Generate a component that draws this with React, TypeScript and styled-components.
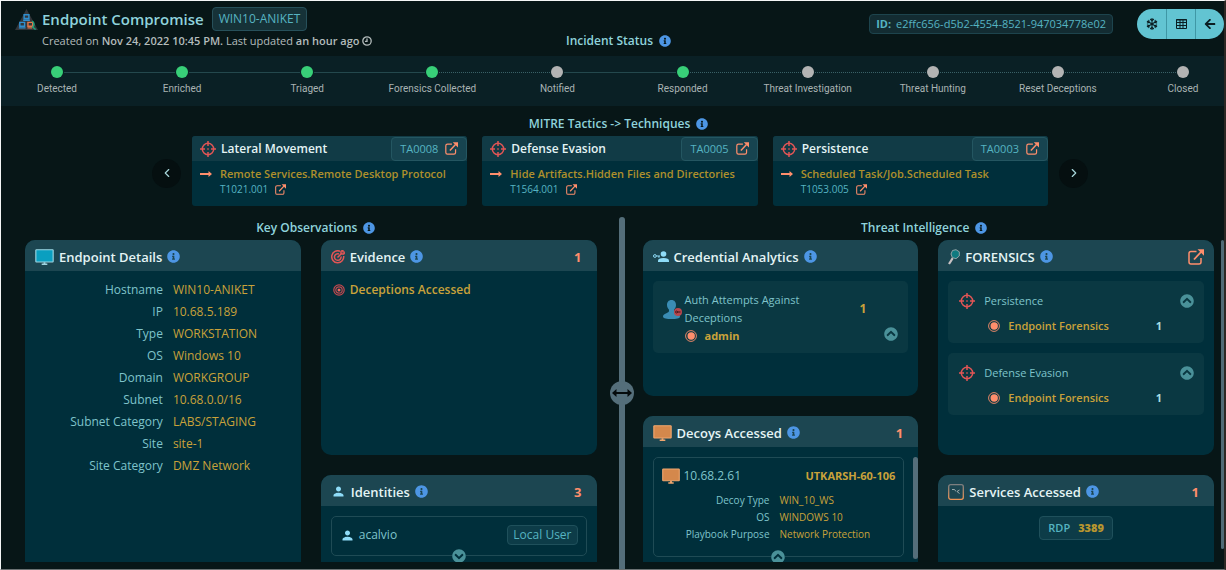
import React from "react";
import styled, { createGlobalStyle, css } from "styled-components";
import {
  FaInfoCircle,
  FaChevronCircleUp,
  FaChevronCircleDown,
  FaRegSnowflake,
  FaArrowLeft,
} from "react-icons/fa";
import { MdPerson } from "react-icons/md";
import { ChevronLeft, ChevronRight } from "lucide-react";

const c = {
  page: "#071617",
  band: "#0a2025",
  card: "#002f3b",
  head: "#1c4651",
  inset: "#0a3842",
  line: "#1f4b55",
  title: "#8fd3dc",
  label: "#7fc4cb",
  teal: "#56b4c2",
  gold: "#c9a23a",
  coral: "#ff8e6c",
  red: "#e25555",
  white: "#e4f4f5",
};

const Global = createGlobalStyle`
  *, *::before, *::after { box-sizing: border-box; }
  body { margin: 0; background: ${c.page}; }
  h1, h2, h3, p, ul, ol, dl, dd { margin: 0; padding: 0; }
  ul, ol { list-style: none; }
  button { font: inherit; cursor: pointer; padding: 0; border: 0; background: none; color: inherit; }
  a { color: inherit; text-decoration: none; }
  svg { display: block; flex: none; }
`;

const Page = styled.div`
  height: 100vh;
  display: flex;
  flex-direction: column;
  overflow: hidden;
  background: ${c.page};
  color: ${c.label};
  font: 12px/18px "Open Sans", "Noto Sans", sans-serif;
  border-style: solid;
  border-width: 1px 2px 1px 1px;
  border-color: #f4f6f6 #2c2824 #6b7273 #f4f6f6;
`;

const Header = styled.header`
  display: grid;
  grid-template-columns: 1fr auto 1fr;
  height: 55px;
  padding-left: 12px;
  flex: none;
`;

const HeaderLeft = styled.div`
  display: grid;
  grid-template-columns: 23px auto;
  column-gap: 4px;
  justify-content: start;
  align-content: start;
  align-items: center;
  padding: 6px 0 0 2px;
`;

const TitleRow = styled.div`
  display: flex;
  align-items: center;
  gap: 8px;
`;

const Title = styled.h1`
  font-size: 15px;
  line-height: 24px;
  font-weight: 600;
  color: ${c.title};
  white-space: nowrap;
`;

const Tag = styled.span<{ $h?: number }>`
  display: inline-flex;
  align-items: center;
  gap: 8px;
  height: ${(p) => p.$h ?? 24}px;
  padding: 0 6px;
  border: 1px solid #27505a;
  border-radius: 4px;
  background: #163238;
  color: ${c.teal};
  white-space: nowrap;
`;

const CardTag = styled(Tag)`
  padding: 0 5px;
  background: #0d3c48;
  border-color: #1f505b;
`;

const IdTag = styled(Tag)`
  gap: 5px;
  padding: 0 6px;
  font-size: 11px;
  background: #132c32;
  border-color: #1d444d;
`;

const Meta = styled.p`
  grid-column: 2;
  display: flex;
  align-items: center;
  gap: 2px;
  font-size: 11px;
  line-height: 20px;
  color: #b4bcbc;
  white-space: nowrap;
  b {
    font-weight: 600;
  }
`;

const HeaderRight = styled.div`
  display: flex;
  justify-content: flex-end;
  align-items: flex-start;
  gap: 24px;
  padding-top: 8px;
`;

const IdWrap = styled.div`
  display: flex;
  padding-top: 5px;
`;

const ButtonGroup = styled.div`
  display: flex;
  border-radius: 15px;
  overflow: hidden;
  background: #62c4d2;
`;

const GroupButton = styled.button`
  width: 29px;
  height: 30px;
  display: grid;
  place-items: center;
  color: #0b1e22;
  & + & {
    border-left: 1px solid #3f97a5;
  }
`;

const SectionTitle = styled.h2`
  display: flex;
  align-items: center;
  justify-content: center;
  gap: 6px;
  font-size: 12px;
  line-height: 22px;
  font-weight: 600;
  color: ${c.title};
  white-space: nowrap;
`;

const StatusTitle = styled(SectionTitle)`
  align-self: end;
  padding-bottom: 4px;
`;

const LeftPaneTitle = styled(SectionTitle)`
  padding-left: 10px;
`;

const RightPaneTitle = styled(SectionTitle)`
  padding-right: 8px;
`;

const InfoButton = styled.button`
  color: #4d96e4;
`;

const Timeline = styled.ol`
  flex: none;
  display: flex;
  height: 50px;
  padding: 10px 41px 0 56px;
  background: ${c.band};
`;

const Step = styled.li`
  flex: 1 1 0;
  display: flex;
  &:last-child {
    flex: 0 0 0;
  }
`;

const Stop = styled.div`
  width: 0;
  display: flex;
  flex-direction: column;
  align-items: center;
  gap: 3px;
  font-family: Roboto, "Noto Sans", sans-serif;
  font-size: 10px;
  line-height: 16px;
  color: #a9b3b3;
  white-space: nowrap;
`;

const Dot = styled.i<{ $done: boolean }>`
  flex: none;
  width: 12px;
  height: 12px;
  border-radius: 50%;
  background: ${(p) => (p.$done ? "#38cf78" : "#b3b3b3")};
`;

const Track = styled.span<{ $dashed: boolean }>`
  flex: 1;
  height: 0;
  margin: 6px 7px 0;
  border-top: ${(p) => (p.$dashed ? "1px dotted #3a6066" : "1px solid #24484d")};
`;

const Mitre = styled.section`
  flex: none;
  padding: 7px 0 11px 12px;
`;

const Carousel = styled.div`
  display: flex;
  align-items: center;
  gap: 11px;
  padding: 0 136px 0 139px;
  margin-top: 1px;
`;

const Nav = styled.button`
  flex: none;
  width: 29px;
  height: 29px;
  margin-top: 4px;
  border-radius: 50%;
  background: #050f10;
  color: #a8d8dc;
  display: grid;
  place-items: center;
`;

const TacticList = styled.ul`
  flex: 1;
  display: grid;
  grid-template-columns: repeat(3, minmax(0, 1fr));
  gap: 15px;
`;

const Tactic = styled.li`
  height: 70px;
  border-radius: 3px;
  overflow: hidden;
  background: ${c.card};
`;

const TacticHead = styled.div`
  display: flex;
  align-items: center;
  gap: 5px;
  height: 25px;
  padding-left: 8px;
  background: #113b46;
  color: ${c.white};
  h3 {
    flex: 1;
    font-size: 12px;
    font-weight: 600;
    white-space: nowrap;
  }
`;

const TacticLink = styled.a`
  display: flex;
  align-items: center;
  gap: 7px;
  height: 24px;
  padding: 0 8px;
  border: 1px solid #245661;
  border-radius: 4px;
  background: #174450;
  font-size: 11px;
  color: ${c.teal};
`;

const TacticBody = styled.div`
  display: grid;
  grid-template-columns: 12px auto;
  column-gap: 8px;
  align-items: center;
  justify-content: start;
  padding: 4px 8px;
  strong {
    font-size: 11px;
    font-weight: 600;
    line-height: 17px;
    color: #ae902c;
    white-space: nowrap;
  }
`;

const TechniqueLink = styled.a`
  grid-column: 2;
  display: flex;
  align-items: center;
  gap: 7px;
  font-size: 10px;
  line-height: 14px;
  color: ${c.teal};
`;

const Split = styled.main`
  flex: 1;
  min-height: 0;
  display: grid;
  grid-template-columns: minmax(0, 1fr) 10px minmax(0, 1fr);
  gap: 18px;
  padding: 0 10px 0 24px;
`;

const Pane = styled.section`
  min-height: 0;
  display: flex;
  flex-direction: column;
  gap: 1px;
  padding-bottom: 7px;
  position: relative;
`;

const Columns = styled.div`
  flex: 1;
  min-height: 0;
  overflow: hidden;
  display: grid;
  grid-template-columns: repeat(2, minmax(0, 1fr));
  gap: 20px;
`;

const Column = styled.div`
  min-height: 0;
  display: flex;
  flex-direction: column;
  gap: 20px;
`;

const PaneThumb = styled.span`
  position: absolute;
  right: -10px;
  top: 23px;
  bottom: 20px;
  width: 3px;
  border-radius: 2px;
  background: #4f6b76;
`;

const Divider = styled.div`
  justify-self: end;
  width: 6px;
  border-radius: 3px 3px 0 0;
  background: #546e7a;
  display: flex;
  align-items: center;
  justify-content: center;
`;

const Handle = styled.button`
  flex: none;
  width: 24px;
  height: 24px;
  border-radius: 50%;
  background: #546e7a;
  color: #050b0c;
  display: grid;
  place-items: center;
`;

const Card = styled.article<{ $h?: number }>`
  ${(p) => (p.$h ? css`flex: 0 0 ${p.$h}px;` : css`flex: 1; min-height: 0;`)}
  display: flex;
  flex-direction: column;
  border-radius: ${(p) => (p.$h ? "10px" : "10px 10px 0 0")};
  overflow: hidden;
  background: ${c.card};
`;

const CardHead = styled.header`
  flex: none;
  display: flex;
  align-items: center;
  gap: 5px;
  height: 31px;
  padding: 2px 10px 0;
  background: ${c.head};
  h3 {
    font-size: 13px;
    font-weight: 600;
    color: ${c.white};
    white-space: nowrap;
  }
`;

const Count = styled.span`
  margin-left: auto;
  padding-right: 5px;
  font-size: 13px;
  font-weight: 700;
  color: ${c.coral};
`;

const OpenLink = styled.a`
  margin-left: auto;
  color: ${c.coral};
`;

const CardBody = styled.div`
  flex: 1;
  min-height: 0;
  display: flex;
  flex-direction: column;
  gap: 10px;
  padding: 10px 10px 0;
  position: relative;
`;

const Facts = styled.dl<{ $small?: boolean }>`
  display: grid;
  grid-template-columns: ${(p) => (p.$small ? "116px auto" : "50% auto")};
  column-gap: 10px;
  font-size: ${(p) => (p.$small ? 10 : 12)}px;
  line-height: ${(p) => (p.$small ? 17 : 22)}px;
  padding-top: ${(p) => (p.$small ? 0 : 8)}px;
  white-space: nowrap;
  dt {
    text-align: right;
  }
  dd {
    color: ${c.gold};
  }
`;

const EvidenceRow = styled.div`
  display: flex;
  align-items: center;
  gap: 5px;
  padding-left: 2px;
  font-weight: 600;
  color: ${c.gold};
`;

const Outlined = styled.div<{ $h: number }>`
  flex: none;
  height: ${(p) => p.$h}px;
  border: 1px solid ${c.line};
  border-radius: 5px;
  position: relative;
`;

const OutlinedRow = styled.div`
  display: flex;
  align-items: center;
  gap: 4px;
  height: 36px;
  padding: 0 8px;
  > :last-child {
    margin-left: auto;
  }
  strong {
    font-size: 11px;
    font-weight: 700;
    color: ${c.gold};
  }
`;

const DecoyBox = styled(Outlined)`
  flex: 1;
  margin-right: 4px;
`;

const DecoyRow = styled(OutlinedRow)`
  height: 34px;
  padding-top: 2px;
`;

const EdgeToggle = styled.button`
  position: absolute;
  left: 50%;
  bottom: -8px;
  margin-left: -7px;
  border-radius: 50%;
  color: #4a9199;
  background: ${c.card};
`;

const Toggle = styled.button`
  color: #4a9199;
`;

const Inset = styled.div`
  flex: none;
  display: grid;
  border-radius: 5px;
  background: ${c.inset};
  font-size: 11px;
`;

const AuthInset = styled(Inset)`
  grid-template-columns: 20px 1fr auto 14px;
  column-gap: 2px;
  padding: 10px 10px 8px;
  > svg {
    margin-top: 9px;
  }
  > b {
    font-size: 12px;
    color: ${c.gold};
    align-self: start;
    margin: 9px 16px 0 0;
  }
  > button {
    align-self: end;
    margin-bottom: 4px;
  }
`;

const Account = styled.div`
  display: flex;
  align-items: center;
  gap: 8px;
  font-weight: 700;
  color: ${c.gold};
`;

const ForensicInset = styled(Inset)`
  grid-template-columns: 16px 1fr auto 14px;
  column-gap: 9px;
  align-items: center;
  padding: 9px 10px 7px 11px;
  row-gap: 4px;
  line-height: 21px;
`;

const ForensicItem = styled(Account)`
  grid-column: 2 / 3;
  padding-left: 4px;
  font-weight: 600;
`;

const ForensicCount = styled.b`
  grid-column: 3;
  padding-right: 9px;
  color: #a9dde3;
`;

const ListThumb = styled.span`
  position: absolute;
  right: 0;
  top: 10px;
  bottom: 3px;
  width: 5px;
  border-radius: 3px;
  background: #546e7a;
`;

const Centered = styled.div`
  display: flex;
  justify-content: center;
`;

const PortTag = styled(CardTag)`
  padding: 0 8px;
  font-size: 11px;
  font-weight: 600;
  b {
    color: #b8962f;
  }
`;

function Info({ size = 13, about }: { size?: number; about: string }) {
  return (
    <InfoButton aria-label={`About ${about}`}>
      <FaInfoCircle size={size} />
    </InfoButton>
  );
}

function Crosshair() {
  return (
    <svg width="16" height="16" viewBox="0 0 16 16" fill="none" stroke={c.red} strokeWidth="1.5">
      <circle cx="8" cy="8" r="5.7" />
      <path d="M8 0v5M8 11v5M0 8h5M11 8h5" />
      <path d="M7.3 8h1.4" />
    </svg>
  );
}

function OpenIcon({ size = 12 }: { size?: number }) {
  return (
    <svg width={size} height={size} viewBox="0 0 16 16" fill="none" stroke={c.coral} strokeWidth="1.5">
      <path d="M8.5 2.5H3Q1 2.5 1 4.5V13Q1 15 3 15H11Q13 15 13 13V9" />
      <path d="M6 10.5 13 3" strokeWidth="1.8" />
      <path d="M9.5 .3H16V6.8Z" fill={c.coral} stroke="none" />
    </svg>
  );
}

function LongArrow() {
  return (
    <svg width="12" height="8" viewBox="0 0 12 8" fill={c.coral}>
      <path d="M0 3H8.5V1L12 4 8.5 7V5H0Z" />
    </svg>
  );
}

function Monitor({ w = 19, fill, edge }: { w?: number; fill: string; edge: string }) {
  return (
    <svg width={w} height={16} viewBox="0 0 20 17">
      <rect x=".8" y=".8" width="18.4" height="13" rx=".6" fill={fill} stroke={edge} strokeWidth="1.2" />
      <path d="M9 14h2v1.4h2V17H7v-1.600h2z" fill={edge} />
    </svg>
  );
}

function Logo() {
  return (
    <svg width="23" height="21" viewBox="0 0 24 22" fill="none">
      <path d="M12 0 24 22H0Z" fill="#33363a" />
      <g strokeWidth="1.5">
        <path d="M9.500 6h5v4h-5zM8.500 11.700h7" stroke="#2f8fd0" />
        <path d="M5 14h5v4H5zM4 19.800h7" stroke="#2f8fd0" />
        <path d="M13.500 14h5v4h-5zM13 19.800h5" stroke="#e0764a" />
        <path d="M18 12.500q3.500 3 .5 6.500l3 2.500" stroke="#1fa07c" />
      </g>
    </svg>
  );
}

function Clock() {
  return (
    <svg width="10" height="10" viewBox="0 0 10 10" fill="none" stroke="#b4bcbc" strokeWidth="1.3">
      <circle cx="5" cy="5" r="4.200" />
      <path d="M5 2.500V5.300H3" />
    </svg>
  );
}

function Grid() {
  return (
    <svg width="11" height="10" viewBox="0 0 11 10" fill="none" stroke="#0b1e22">
      <path d="M.5 .5h10v9H.5zM0 1h11M.5 3.500h10M.5 6.500h10M4 1v8.500M7 1v8.500" />
    </svg>
  );
}

function Goal() {
  return (
    <svg width="14" height="14" viewBox="0 0 14 14" fill="none" stroke={c.red} strokeWidth="1.5">
      <path d="M9 1.200A6 6 0 1 0 12.700 6" />
      <path d="M8 4A3.300 3.300 0 1 0 10 6.500" />
      <path d="M6.500 7.500 11 3M10 1.500V4h2.700L14 2.200 12 1.900 11.800 0Z" />
    </svg>
  );
}

function Bullseye() {
  return (
    <svg width="12" height="12" viewBox="0 0 12 12" fill="none" stroke="#c0494f" strokeWidth="1.2">
      <circle cx="6" cy="6" r="5.200" />
      <circle cx="6" cy="6" r="3.200" />
      <circle cx="6" cy="6" r="1.500" fill="#ef6a62" stroke="none" />
    </svg>
  );
}

function Radio() {
  return (
    <svg width="12" height="12" viewBox="0 0 12 12" fill="none" stroke={c.coral}>
      <circle cx="6" cy="6" r="5.400" strokeWidth=".9" />
      <circle cx="6.200" cy="6" r="3.700" fill={c.coral} stroke="none" />
    </svg>
  );
}

function KeyUser() {
  return (
    <svg width="16" height="12" viewBox="0 0 16 12" fill="#8fdcf8">
      <circle cx="10.500" cy="3" r="2.800" />
      <path d="M5 11V9.800Q5 7 10.500 7T16 9.800V11Z" />
      <circle cx="1.900" cy="5" r="1.400" fill="none" stroke="#8fdcf8" strokeWidth="1" />
      <path d="M3.300 4.500H7v1H6.400v1.300h-1V5.500H3.300Z" />
    </svg>
  );
}

function BlockedUser() {
  return (
    <svg width="20" height="19" viewBox="0 0 20 19">
      <path
        d="M8.500 0C5.500 0 4 2.300 4 5c0 2.200 1 3.600 2 4.800.3 2-.5 2.600-2.600 3.400C1 14.200 0 15 0 16.500c0 2 4 2.500 8.500 2.500S17 18.500 17 16.500c0-1.500-1-2.300-3.400-3.300C11.500 12.400 10.700 11.800 11 9.800c1-1.200 2-2.600 2-4.800 0-2.700-1.500-5-4.500-5Z"
        fill="#3a8cb4"
      />
      <circle cx="15" cy="12" r="4" fill="#b8474e" />
      <path d="M14 12h3.500" stroke="#3a1216" strokeWidth="1.200" />
      <circle cx="13.500" cy="12" r="1" fill="none" stroke="#3a1216" strokeWidth=".8" />
    </svg>
  );
}

function Magnifier() {
  return (
    <svg width="12" height="16" viewBox="0 0 12 16">
      <path d="M4.700 9.200 1 15" stroke="#c9c2c4" strokeWidth="2.200" />
      <path d="M4.500 1.500 8 .7l3.300 2.100V7L8 9.700 4.300 8.500 3 5Z" fill="#0f7a80" stroke="#8fa3a6" />
    </svg>
  );
}

function ServiceIcon() {
  return (
    <svg width="16" height="16" viewBox="0 0 16 16" fill="none">
      <defs>
        <linearGradient id="svc" x2="0" y2="1">
          <stop stopColor="#7d7f80" />
          <stop offset="1" stopColor="#f09354" />
        </linearGradient>
      </defs>
      <rect x=".7" y=".7" width="14.600" height="14.600" rx="2" stroke="url(#svc)" strokeWidth="1.300" />
      <path d="M4 5.500h2.500l1.500 2M11.500 6 9 7.500l2.500 2" stroke="#a9b7b9" strokeWidth=".9" />
    </svg>
  );
}

function ResizeArrow() {
  return (
    <svg width="20" height="8" viewBox="0 0 20 8">
      <path d="M0 4 4.500 0V2.900h11V0L20 4 15.500 8V5.100h-11V8Z" fill="currentColor" />
    </svg>
  );
}

const steps = [
  { name: "Detected", done: true, dashed: false },
  { name: "Enriched", done: true, dashed: false },
  { name: "Triaged", done: true, dashed: false },
  { name: "Forensics Collected", done: true, dashed: true },
  { name: "Notified", done: false, dashed: false },
  { name: "Responded", done: true, dashed: true },
  { name: "Threat Investigation", done: false, dashed: true },
  { name: "Threat Hunting", done: false, dashed: true },
  { name: "Reset Deceptions", done: false, dashed: true },
  { name: "Closed", done: false, dashed: true },
];

const tactics = [
  { name: "Lateral Movement", id: "TA0008", technique: "Remote Services.Remote Desktop Protocol", tid: "T1021.001" },
  { name: "Defense Evasion", id: "TA0005", technique: "Hide Artifacts.Hidden Files and Directories", tid: "T1564.001" },
  { name: "Persistence", id: "TA0003", technique: "Scheduled Task/Job.Scheduled Task", tid: "T1053.005" },
];

const endpoint = [
  ["Hostname", "WIN10-ANIKET"],
  ["IP", "10.68.5.189"],
  ["Type", "WORKSTATION"],
  ["OS", "Windows 10"],
  ["Domain", "WORKGROUP"],
  ["Subnet", "10.68.0.0/16"],
  ["Subnet Category", "LABS/STAGING"],
  ["Site", "site-1"],
  ["Site Category", "DMZ Network"],
];

const decoy = [
  ["Decoy Type", "WIN_10_WS"],
  ["OS", "WINDOWS 10"],
  ["Playbook Purpose", "Network Protection"],
];

function FactList({ rows, small }: { rows: string[][]; small?: boolean }) {
  return (
    <Facts $small={small}>
      {rows.map(([k, v]) => (
        <React.Fragment key={k}>
          <dt>{k}</dt>
          <dd>{v}</dd>
        </React.Fragment>
      ))}
    </Facts>
  );
}

export default function App() {
  return (
    <Page>
      <Global />
      <Header>
        <HeaderLeft>
          <Logo />
          <TitleRow>
            <Title>Endpoint Compromise</Title>
            <Tag>WIN10-ANIKET</Tag>
          </TitleRow>
          <Meta>
            <span>
              Created on <b>Nov 24, 2022 10:45 PM.</b> Last updated <b>an hour ago</b>
            </span>
            <Clock />
          </Meta>
        </HeaderLeft>
        <StatusTitle>
          Incident Status <Info size={12} about="incident status" />
        </StatusTitle>
        <HeaderRight>
          <IdWrap>
            <IdTag $h={20}>
              <b>ID:</b> e2ffc656-d5b2-4554-8521-947034778e02
            </IdTag>
          </IdWrap>
          <ButtonGroup>
            <GroupButton aria-label="Freeze">
              <FaRegSnowflake size={12} />
            </GroupButton>
            <GroupButton aria-label="Table view">
              <Grid />
            </GroupButton>
            <GroupButton aria-label="Back">
              <FaArrowLeft size={12} />
            </GroupButton>
          </ButtonGroup>
        </HeaderRight>
      </Header>

      <Timeline>
        {steps.map((s, i) => (
          <Step key={s.name}>
            <Stop>
              <Dot $done={s.done} />
              <span>{s.name}</span>
            </Stop>
            {i < steps.length - 1 && <Track $dashed={s.dashed} />}
          </Step>
        ))}
      </Timeline>

      <Mitre>
        <SectionTitle>
          MITRE Tactics -&gt; Techniques <Info size={12} about="MITRE tactics" />
        </SectionTitle>
        <Carousel>
          <Nav aria-label="Previous">
            <ChevronLeft size={14} />
          </Nav>
          <TacticList>
            {tactics.map((t) => (
              <Tactic key={t.id}>
                <TacticHead>
                  <Crosshair />
                  <h3>{t.name}</h3>
                  <TacticLink href="#">
                    {t.id} <OpenIcon size={13} />
                  </TacticLink>
                </TacticHead>
                <TacticBody>
                  <LongArrow />
                  <strong>{t.technique}</strong>
                  <TechniqueLink href="#">
                    {t.tid} <OpenIcon size={11} />
                  </TechniqueLink>
                </TacticBody>
              </Tactic>
            ))}
          </TacticList>
          <Nav aria-label="Next">
            <ChevronRight size={14} />
          </Nav>
        </Carousel>
      </Mitre>

      <Split>
        <Pane>
          <LeftPaneTitle>
            Key Observations <Info size={12} about="key observations" />
          </LeftPaneTitle>
          <Columns>
            <Column>
              <Card>
                <CardHead>
                  <Monitor fill="#0a9fc0" edge="#9fd4e0" />
                  <h3>Endpoint Details</h3>
                  <Info about="endpoint details" />
                </CardHead>
                <FactList rows={endpoint} />
              </Card>
            </Column>
            <Column>
              <Card $h={215}>
                <CardHead>
                  <Goal />
                  <h3>Evidence</h3>
                  <Info about="evidence" />
                  <Count>1</Count>
                </CardHead>
                <CardBody>
                  <EvidenceRow>
                    <Bullseye /> Deceptions Accessed
                  </EvidenceRow>
                </CardBody>
              </Card>
              <Card>
                <CardHead>
                  <MdPerson size={15} color="#8fdcf8" />
                  <h3>Identities</h3>
                  <Info about="identities" />
                  <Count>3</Count>
                </CardHead>
                <CardBody>
                  <Outlined $h={40}>
                    <OutlinedRow>
                      <MdPerson size={15} color="#8fdcf8" />
                      <span>acalvio</span>
                      <CardTag $h={20}>Local User</CardTag>
                    </OutlinedRow>
                    <EdgeToggle aria-label="Expand">
                      <FaChevronCircleDown size={14} />
                    </EdgeToggle>
                  </Outlined>
                </CardBody>
              </Card>
            </Column>
          </Columns>
        </Pane>

        <Divider>
          <Handle aria-label="Resize panes">
            <ResizeArrow />
          </Handle>
        </Divider>

        <Pane>
          <RightPaneTitle>
            Threat Intelligence <Info size={12} about="threat intelligence" />
          </RightPaneTitle>
          <Columns>
            <Column>
              <Card $h={156}>
                <CardHead>
                  <KeyUser />
                  <h3>Credential Analytics</h3>
                  <Info about="credential analytics" />
                </CardHead>
                <CardBody>
                  <AuthInset>
                    <BlockedUser />
                    <div>
                      <p>
                        Auth Attempts Against
                        <br />
                        Deceptions
                      </p>
                      <Account>
                        <Radio /> admin
                      </Account>
                    </div>
                    <b>1</b>
                    <Toggle aria-label="Collapse">
                      <FaChevronCircleUp size={14} />
                    </Toggle>
                  </AuthInset>
                </CardBody>
              </Card>
              <Card>
                <CardHead>
                  <Monitor fill="#d4884c" edge="#f0a66e" />
                  <h3>Decoys Accessed</h3>
                  <Info about="decoys accessed" />
                  <Count>1</Count>
                </CardHead>
                <CardBody>
                  <Centered>
                    <DecoyBox $h={100}>
                      <DecoyRow>
                        <Monitor w={18} fill="#d4884c" edge="#f0a66e" />
                        <span>10.68.2.61</span>
                        <strong>UTKARSH-60-106</strong>
                      </DecoyRow>
                      <FactList rows={decoy} small />
                      <EdgeToggle aria-label="Collapse">
                        <FaChevronCircleUp size={14} />
                      </EdgeToggle>
                    </DecoyBox>
                  </Centered>
                  <ListThumb />
                </CardBody>
              </Card>
            </Column>
            <Column>
              <Card $h={215}>
                <CardHead>
                  <Magnifier />
                  <h3>FORENSICS</h3>
                  <Info about="forensics" />
                  <OpenLink href="#" aria-label="Open forensics">
                    <OpenIcon size={16} />
                  </OpenLink>
                </CardHead>
                <CardBody>
                  {["Persistence", "Defense Evasion"].map((name) => (
                    <ForensicInset key={name}>
                      <Crosshair />
                      <span>{name}</span>
                      <span />
                      <Toggle aria-label="Collapse">
                        <FaChevronCircleUp size={14} />
                      </Toggle>
                      <ForensicItem>
                        <Radio /> Endpoint Forensics
                      </ForensicItem>
                      <ForensicCount>1</ForensicCount>
                    </ForensicInset>
                  ))}
                </CardBody>
              </Card>
              <Card>
                <CardHead>
                  <ServiceIcon />
                  <h3>Services Accessed</h3>
                  <Info about="services accessed" />
                  <Count>1</Count>
                </CardHead>
                <CardBody>
                  <Centered>
                    <PortTag>
                      RDP <b>3389</b>
                    </PortTag>
                  </Centered>
                </CardBody>
              </Card>
            </Column>
          </Columns>
          <PaneThumb />
        </Pane>
      </Split>
    </Page>
  );
}
